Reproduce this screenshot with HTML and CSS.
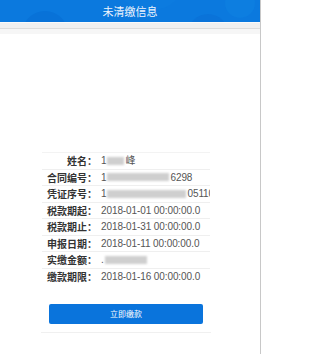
FILE: index.html
```html
<!DOCTYPE html>
<html lang="zh">
<head>
<meta charset="utf-8">
<link rel="stylesheet" href="styles.css">
</head>
<body>
<div class="page">
  <header class="header">
    <span class="circle c1"></span>
    <span class="circle c2"></span>
    <span class="circle c3"></span>
    <span class="circle c4"></span>
    <h1 class="title">未清缴信息</h1>
  </header>
  <div class="subbar">
    <div class="subbar-top"></div>
    <div class="subbar-bottom"></div>
  </div>
  <main class="content">
    <div class="info">
      <div class="row"><div class="label">姓名：</div><div class="value">1<span class="blur w20"></span>峰</div></div>
      <div class="row"><div class="label">合同编号：</div><div class="value">1<span class="blur w64"></span>6298</div></div>
      <div class="row"><div class="label">凭证序号：</div><div class="value">1<span class="blur w82"></span>05110</div></div>
      <div class="row"><div class="label">税款期起：</div><div class="value">2018-01-01 00:00:00.0</div></div>
      <div class="row"><div class="label">税款期止：</div><div class="value">2018-01-31 00:00:00.0</div></div>
      <div class="row"><div class="label">申报日期：</div><div class="value">2018-01-11 00:00:00.0</div></div>
      <div class="row"><div class="label">实缴金额：</div><div class="value">.<span class="blur w42"></span></div></div>
      <div class="row"><div class="label">缴款期限：</div><div class="value">2018-01-16 00:00:00.0</div></div>
    </div>
    <div class="actions">
      <button class="pay-btn" type="button">立即缴款</button>
    </div>
    <div class="bottom-line"></div>
  </main>
</div>
</body>
</html>
```
FILE: styles.css
```css
html, body {
  margin: 0;
  padding: 0;
  background: #ffffff;
}
body {
  font-family: "Liberation Sans", "Noto Sans CJK SC", sans-serif;
}
.page {
  width: 260px;
  min-height: 354px;
  border-right: 1px solid #c8c8c8;
  background: #ffffff;
}
.header {
  position: relative;
  height: 22px;
  background: #0b79de;
  overflow: hidden;
  display: flex;
  align-items: center;
  justify-content: center;
}
.circle {
  position: absolute;
  border-radius: 50%;
}
.c1 {
  left: 22px;
  top: 11px;
  width: 46px;
  height: 46px;
  background: #0872d8;
}
.c2 {
  left: 188px;
  top: 14px;
  width: 40px;
  height: 40px;
  background: #0a73d9;
}
.c3 {
  left: 225px;
  top: -12px;
  width: 30px;
  height: 30px;
  background: #0d7ee0;
}
.c4 {
  left: 120px;
  top: -30px;
  width: 60px;
  height: 40px;
  background: #0c7bdf;
}
.title {
  position: relative;
  margin: 0;
  font-family: "Noto Sans CJK SC", sans-serif;
  font-size: 11px;
  font-weight: 400;
  color: #eef5fd;
  line-height: 22px;
}
.subbar {
  border-top: 1px solid #fafafa;
}
.subbar-top {
  height: 5px;
  background: #f0f0f0;
  border-bottom: 1px solid #dcdcdc;
}
.subbar-bottom {
  height: 5px;
  background: #f6f6f6;
}
.content {
  padding-top: 118px;
}
.info {
  margin-left: 42px;
  width: 168px;
  overflow: hidden;
}
.row {
  display: flex;
  border-top: 1px solid #efefef;
  height: 15.5px;
  align-items: center;
  white-space: nowrap;
}
.row:first-child {
  border-top-color: #f3f3f3;
}
.label {
  width: 55px;
  flex: none;
  text-align: right;
  font-family: "Noto Sans CJK SC", sans-serif;
  font-size: 10px;
  font-weight: 700;
  color: #333333;
  line-height: 15px;
}
.value {
  padding-left: 4px;
  font-family: "Liberation Sans", "Noto Sans CJK SC", sans-serif;
  font-size: 10px;
  letter-spacing: -0.1px;
  color: #555555;
  line-height: 15px;
  display: flex;
  align-items: center;
}
.blur {
  display: inline-block;
  height: 8px;
  margin: 0 1px;
  background: #cfcfcf;
  filter: blur(1.2px);
}
.w20 { width: 17px; }
.w64 { width: 62px; }
.w82 { width: 79px; }
.w42 { width: 42px; }
.actions {
  margin-top: 20px;
  margin-left: 49px;
}
.pay-btn {
  display: block;
  width: 154px;
  height: 20px;
  padding: 0;
  border: none;
  border-radius: 2px;
  background: #0a74dc;
  color: #ffffff;
  font-family: "Noto Sans CJK SC", sans-serif;
  font-size: 8px;
  line-height: 20px;
}
.bottom-line {
  margin: 8px 0 0 41px;
  width: 170px;
  height: 1px;
  background: #f0f0f0;
}
```
